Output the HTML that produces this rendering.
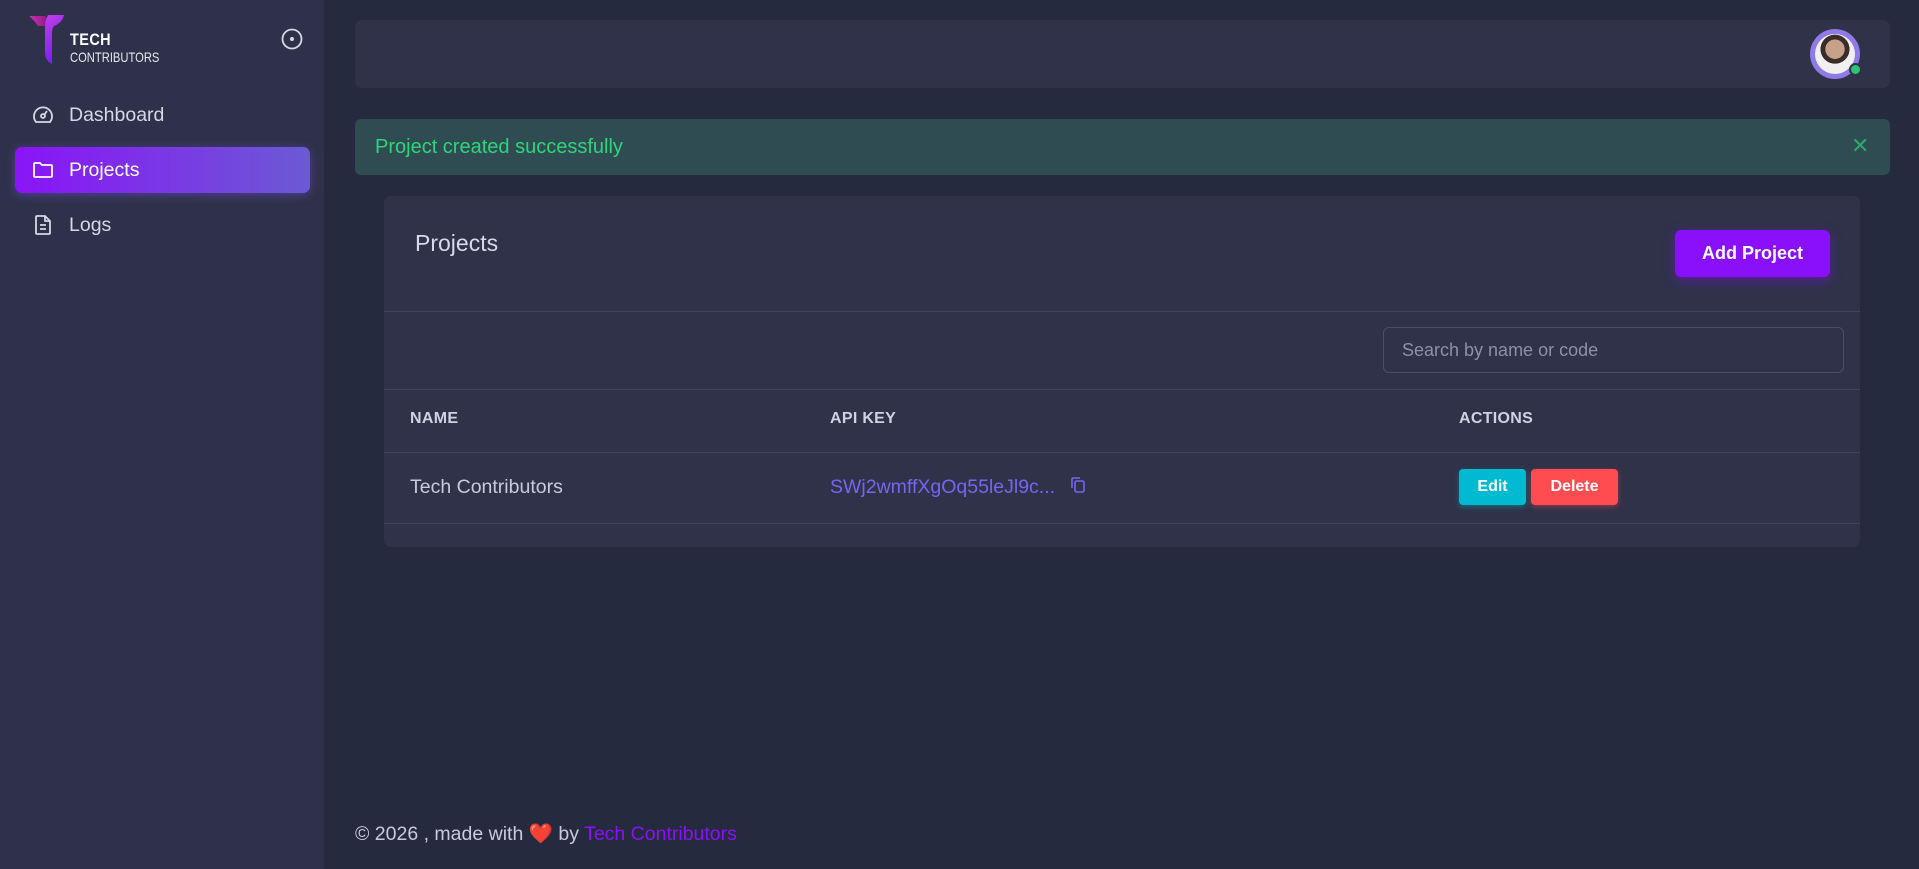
<!DOCTYPE html>
<html><head><meta charset="utf-8"><style>
*{box-sizing:border-box;margin:0;padding:0}
body{width:1919px;height:869px;background:#262a3e;font-family:"Liberation Sans",sans-serif;color:#d4d6e6;position:relative;overflow:hidden}
.side{position:absolute;left:0;top:0;width:324px;height:869px;background:#2e3149}
.nav{position:absolute;left:15px;width:295px;height:46px;border-radius:7px;display:flex;align-items:center;padding-left:16px;font-size:19.5px;color:#d6d8e8}
.nav svg{margin-right:14px}
.act{background:linear-gradient(90deg,#8a14f7,#6b5ad4);color:#fff;box-shadow:0 2px 10px rgba(120,80,240,.45)}
.box{position:absolute;background:#2f3249;border-radius:7px}
.th{position:absolute;top:410px;font-size:16px;font-weight:bold;color:#d0d2e2;letter-spacing:.3px}
.hr{position:absolute;left:384px;width:1476px;height:1px;background:#41455c}
</style></head><body>
<div class="side">
 <svg style="position:absolute;left:28px;top:14px" width="40" height="52" viewBox="0 0 40 52">
  <defs><linearGradient id="g" x1="0" y1="0" x2="0.3" y2="1"><stop offset="0" stop-color="#c040e8"/><stop offset="1" stop-color="#7a1ef0"/></linearGradient>
  <linearGradient id="g2" x1="0" y1="0" x2="1" y2="0"><stop offset="0" stop-color="#d030b0"/><stop offset="1" stop-color="#8a1a8a"/></linearGradient></defs>
  <path d="M1 2 L17 2 Q20 6 20 12 L10 12 Q6 6 1 2Z" fill="url(#g2)"/>
  <path d="M20 1 L36 1 Q34 9 26 12 Q24 14 24 20 L24 50 Q17 47 17 38 L17 14 Q17 6 20 1Z" fill="url(#g)"/>
 </svg>
 <div style="position:absolute;left:70px;top:30px;font-size:17px;font-weight:bold;color:#fff;letter-spacing:.5px;transform:scaleX(.85);transform-origin:left">TECH</div>
 <div style="position:absolute;left:70px;top:49px;font-size:14px;color:#e6e6f0;transform:scaleX(.8);transform-origin:left">CONTRIBUTORS</div>
 <svg style="position:absolute;left:281px;top:28px" width="22" height="22" viewBox="0 0 22 22"><circle cx="11" cy="11" r="9.5" fill="none" stroke="#d6d8e8" stroke-width="1.8"/><circle cx="11" cy="11" r="2" fill="#d6d8e8"/></svg>
 <div class="nav" style="top:92px"><svg width="24" height="24" viewBox="0 0 24 24" fill="none" stroke="#d6d8e8" stroke-width="1.8"><path d="M5 19a9 9 0 1 1 14 0Z"/><circle cx="12" cy="13" r="2"/><path d="M13.5 11.5L16 8"/></svg>Dashboard</div>
 <div class="nav act" style="top:147px"><svg width="24" height="24" viewBox="0 0 24 24" fill="none" stroke="#fff" stroke-width="1.8"><path d="M3 6a1 1 0 0 1 1-1h5l2 2h9a1 1 0 0 1 1 1v10a1 1 0 0 1-1 1H4a1 1 0 0 1-1-1Z"/></svg>Projects</div>
 <div class="nav" style="top:202px"><svg width="24" height="24" viewBox="0 0 24 24" fill="none" stroke="#d6d8e8" stroke-width="1.8"><path d="M6 3h8l5 5v12a1 1 0 0 1-1 1H6a1 1 0 0 1-1-1V4a1 1 0 0 1 1-1Z"/><path d="M14 3v5h5M9 12h6M9 16h6"/></svg>Logs</div>
</div>
<div class="box" style="left:355px;top:20px;width:1535px;height:68px"></div>
<div style="position:absolute;left:1810px;top:29px;width:50px;height:50px;border-radius:50%;background:#8f7ae8"><div style="position:absolute;left:5px;top:5px;width:40px;height:40px;border-radius:50%;background:radial-gradient(circle at 50% 38%,#c9a08a 0 30%,#3a2c28 31% 45%,#f0f0f0 46%)"></div><div style="position:absolute;right:-2px;bottom:3px;width:13px;height:13px;border-radius:50%;background:#28c76f;border:2px solid #2f3249"></div></div>
<div style="position:absolute;left:355px;top:119px;width:1535px;height:56px;background:#2f4c52;border-radius:6px"></div>
<div style="position:absolute;left:375px;top:136px;font-size:20px;color:#2ed57a">Project created successfully</div>
<div style="position:absolute;left:1851px;top:133px;font-size:22px;color:#2ea86a">✕</div>
<div class="box" style="left:384px;top:196px;width:1476px;height:351px"></div>
<div style="position:absolute;left:415px;top:230px;font-size:23px;color:#d8d9ea">Projects</div>
<div style="position:absolute;left:1675px;top:230px;width:155px;height:47px;background:#8a10fb;border-radius:6px;color:#fff;font-size:18px;font-weight:bold;display:flex;align-items:center;justify-content:center;box-shadow:0 4px 12px rgba(138,16,251,.45)">Add Project</div>
<div class="hr" style="top:311px"></div>
<div style="position:absolute;left:1383px;top:327px;width:461px;height:46px;border:1px solid #4b4f66;border-radius:6px;font-size:18px;color:#8d90a6;padding:12px 0 0 18px">Search by name or code</div>
<div class="hr" style="top:389px"></div>
<div class="th" style="left:410px">NAME</div>
<div class="th" style="left:830px">API KEY</div>
<div class="th" style="left:1459px">ACTIONS</div>
<div class="hr" style="top:452px"></div>
<div style="position:absolute;left:410px;top:476px;font-size:19.5px;color:#c9cbdc">Tech Contributors</div>
<div style="position:absolute;left:830px;top:476px;font-size:19.5px;color:#7367f0">SWj2wmffXgOq55leJl9c...</div>
<svg style="position:absolute;left:1070px;top:476px" width="16" height="18" viewBox="0 0 16 18" fill="none" stroke="#7367f0" stroke-width="1.6"><rect x="5" y="5" width="9" height="11" rx="1.5"/><path d="M2 12V3a1 1 0 0 1 1-1h7"/></svg>
<div style="position:absolute;left:1459px;top:469px;width:67px;height:36px;background:#00bad1;border-radius:4px;color:#fff;font-size:16px;font-weight:bold;display:flex;align-items:center;justify-content:center;box-shadow:0 2px 6px rgba(0,186,209,.4)">Edit</div>
<div style="position:absolute;left:1531px;top:469px;width:87px;height:36px;background:#ff4c51;border-radius:4px;color:#fff;font-size:16px;font-weight:bold;display:flex;align-items:center;justify-content:center;box-shadow:0 2px 6px rgba(255,76,81,.4)">Delete</div>
<div class="hr" style="top:523px"></div>
<div style="position:absolute;left:355px;top:822px;font-size:19.5px;color:#c9cbdc">© 2026 , made with <span style="color:#ff4c70">❤️</span> by <span style="color:#8a10fb">Tech Contributors</span></div>
</body></html>
